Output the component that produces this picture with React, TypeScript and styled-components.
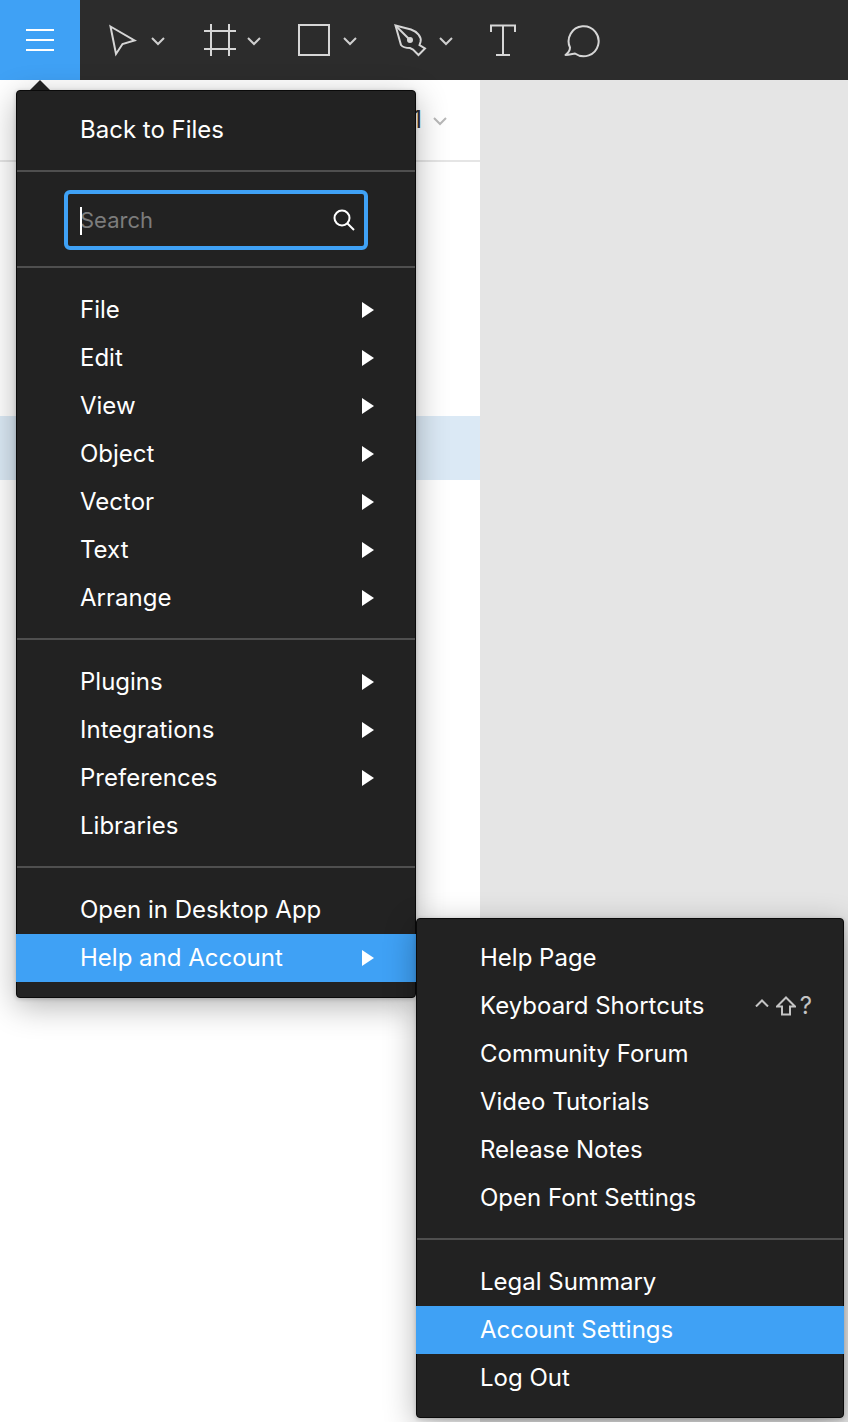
import React from 'react'
import styled, { createGlobalStyle } from 'styled-components'

const BLUE = '#3fa1f5'

const GlobalStyle = createGlobalStyle`
  html, body {
    margin: 0;
    padding: 0;
    background: #fff;
  }
  * {
    box-sizing: border-box;
  }
`

const Page = styled.div`
  position: relative;
  width: 848px;
  height: 1422px;
  overflow: hidden;
  display: flex;
  flex-direction: column;
  font-family: Inter, "Liberation Sans", sans-serif;
  font-size: 24px;
`

const Toolbar = styled.header`
  height: 80px;
  flex: none;
  display: flex;
  background: #2c2c2c;
`

const MenuButton = styled.div`
  width: 80px;
  margin-right: 16px;
  display: flex;
  align-items: center;
  justify-content: center;
  background: ${BLUE};
`

const Tool = styled.div`
  width: 96px;
  padding-left: 8px;
  display: flex;
  align-items: center;
  gap: 6px;
`

const PlainTools = styled.div`
  padding-left: 3px;
  display: flex;
  align-items: center;
  gap: 38px;
`

const ToolIcon = styled.svg.attrs({ viewBox: '0 0 40 40', fill: 'none' })`
  width: 40px;
  height: 40px;
  flex: none;
  stroke: #d6d6d6;
  stroke-width: 2;
`

const Chevron = styled.svg.attrs({ viewBox: '0 0 16 16', fill: 'none' })<{ $color?: string }>`
  width: 16px;
  height: 16px;
  flex: none;
  stroke: ${p => p.$color || '#cfcfcf'};
  stroke-width: 2;
`

const Body = styled.main`
  flex: 1;
  display: flex;
`

const LeftPanel = styled.aside`
  width: 480px;
  flex: none;
  background: #fff;
`

const PanelHeader = styled.div`
  height: 82px;
  padding-right: 32px;
  display: flex;
  align-items: center;
  justify-content: flex-end;
  gap: 10px;
  border-bottom: 2px solid #e5e5e5;
  color: #333;
  line-height: 80px;
`

const LayerList = styled.div`
  padding-top: 254px;
`

const LayerRow = styled.div<{ $selected?: boolean }>`
  height: 64px;
  background: ${p => (p.$selected ? '#dbe9f5' : 'transparent')};
`

const Canvas = styled.div`
  flex: 1;
  background: #e5e5e5;
`

const Menu = styled.nav<{ $left: number; $top: number; $width: number }>`
  position: absolute;
  left: ${p => p.$left}px;
  top: ${p => p.$top}px;
  width: ${p => p.$width}px;
  padding: 15px 0;
  background: #222;
  border: 1px solid #0a0a0a;
  border-radius: 4px;
  box-shadow: 0 8px 32px rgba(0, 0, 0, 0.3), 0 1px 4px rgba(0, 0, 0, 0.2);
  color: #fff;
`

const Notch = styled.div`
  position: absolute;
  left: 13px;
  top: -11px;
  width: 0;
  height: 0;
  border-left: 10px solid transparent;
  border-right: 10px solid transparent;
  border-bottom: 10px solid #222;
`

const Row = styled.div<{ $active?: boolean }>`
  height: 48px;
  margin: 0 -1px;
  padding: 0 42px 0 64px;
  display: flex;
  align-items: center;
  justify-content: space-between;
  background: ${p => (p.$active ? BLUE : 'transparent')};
  line-height: 48px;
  white-space: nowrap;
`

const Arrow = styled.span`
  width: 0;
  height: 0;
  flex: none;
  border-left: 12px solid #fff;
  border-top: 8px solid transparent;
  border-bottom: 8px solid transparent;
`

const Divider = styled.div`
  height: 2px;
  margin: 16px 0 18px;
  background: #4f4f4f;
`

const SearchField = styled.div`
  height: 60px;
  margin: 0 47px;
  padding: 0 8px 0 12px;
  display: flex;
  align-items: center;
  justify-content: space-between;
  border: 4px solid ${BLUE};
  border-radius: 6px;
  color: #7c7c7c;
  font-size: 22px;
`

const Placeholder = styled.span`
  position: relative;

  &::before {
    content: "";
    position: absolute;
    left: 0;
    top: 0;
    width: 2px;
    height: 28px;
    background: #fff;
  }
`

const Shortcut = styled.span`
  margin-right: -10px;
  display: flex;
  align-items: center;
  color: #c4c4c4;
`

const ShortcutIcon = styled.svg.attrs({ fill: 'none' })`
  flex: none;
  stroke: #c4c4c4;
  stroke-width: 2;
`

const ControlKey = styled(ShortcutIcon)`
  margin-top: -6px;
`

const ShiftKey = styled(ShortcutIcon)`
  margin: 0 4px 0 7px;
`

const mainGroups = [
  ['File', 'Edit', 'View', 'Object', 'Vector', 'Text', 'Arrange'],
  ['Plugins', 'Integrations', 'Preferences'],
]

const ChevronIcon = ({ color }: { color?: string }) => (
  <Chevron $color={color}>
    <path d="M2 6l6 6 6-6" />
  </Chevron>
)

const SubRow = ({ label }: { label: string }) => (
  <Row>
    <span>{label}</span>
    <Arrow />
  </Row>
)

export default function App() {
  return (
    <Page>
      <GlobalStyle />
      <Toolbar>
        <MenuButton>
          <svg width="28" height="22" viewBox="0 0 28 22" stroke="#fff" strokeWidth="2">
            <path d="M0 1h28M0 11h28M0 21h28" />
          </svg>
        </MenuButton>
        <Tool>
          <ToolIcon>
            <path d="M6.5 6.5L30.5 20.5 18.5 24 12 34Z" strokeLinejoin="miter" />
          </ToolIcon>
          <ChevronIcon />
        </Tool>
        <Tool>
          <ToolIcon>
            <path d="M4 11h32M4 29h32M11 4v32M29 4v32" />
          </ToolIcon>
          <ChevronIcon />
        </Tool>
        <Tool>
          <ToolIcon>
            <rect x="3" y="5" width="30" height="30" />
          </ToolIcon>
          <ChevronIcon />
        </Tool>
        <Tool>
          <ToolIcon>
            <path d="M3.5 5.5L19 9.5C25 11.5 30 17 28.5 22L27.5 25 33 28.5 26.5 35 21 29.5 18 28C14 28 11 27.5 9 25Z" />
            <path d="M3.5 5.5L18 20" />
            <circle cx="18" cy="20" r="3" fill="#d6d6d6" stroke="none" />
          </ToolIcon>
          <ChevronIcon />
        </Tool>
        <PlainTools>
          <ToolIcon>
            <path d="M8 12V5.5H32V12M20 5.5V35M13 35H27" />
          </ToolIcon>
          <ToolIcon>
            <path d="M14 33.5A15 15 0 1 0 9 27.5C9 29.5 7 33 4.5 35C8 35 11 34 14 33.5Z" strokeLinejoin="round" />
          </ToolIcon>
        </PlainTools>
      </Toolbar>

      <Body>
        <LeftPanel>
          <PanelHeader>
            <span>Page 1</span>
            <ChevronIcon color="#b8b8b8" />
          </PanelHeader>
          <LayerList>
            <LayerRow $selected />
          </LayerList>
        </LeftPanel>
        <Canvas />
      </Body>

      <Menu $left={16} $top={90} $width={400}>
        <Notch />
        <Row>
          <span>Back to Files</span>
        </Row>
        <Divider />
        <SearchField>
          <Placeholder>Search</Placeholder>
          <svg width="24" height="24" viewBox="0 0 24 24" fill="none" stroke="#fff" strokeWidth="2">
            <circle cx="10" cy="10" r="7.5" />
            <path d="M15.5 15.5L22 22" />
          </svg>
        </SearchField>
        <Divider />
        {mainGroups[0].map(l => (
          <SubRow key={l} label={l} />
        ))}
        <Divider />
        {mainGroups[1].map(l => (
          <SubRow key={l} label={l} />
        ))}
        <Row>
          <span>Libraries</span>
        </Row>
        <Divider />
        <Row>
          <span>Open in Desktop App</span>
        </Row>
        <Row $active>
          <span>Help and Account</span>
          <Arrow />
        </Row>
      </Menu>

      <Menu $left={416} $top={918} $width={428}>
        <Row>
          <span>Help Page</span>
        </Row>
        <Row>
          <span>Keyboard Shortcuts</span>
          <Shortcut>
            <ControlKey width="14" height="8" viewBox="0 0 14 8">
              <path d="M1 7.5L7 1.5 13 7.5" />
            </ControlKey>
            <ShiftKey width="20" height="20" viewBox="0 0 20 20">
              <path d="M10 1.5L19 10.5H14V18.5H6V10.5H1Z" />
            </ShiftKey>
            <span>?</span>
          </Shortcut>
        </Row>
        <Row>
          <span>Community Forum</span>
        </Row>
        <Row>
          <span>Video Tutorials</span>
        </Row>
        <Row>
          <span>Release Notes</span>
        </Row>
        <Row>
          <span>Open Font Settings</span>
        </Row>
        <Divider />
        <Row>
          <span>Legal Summary</span>
        </Row>
        <Row $active>
          <span>Account Settings</span>
        </Row>
        <Row>
          <span>Log Out</span>
        </Row>
      </Menu>
    </Page>
  )
}
